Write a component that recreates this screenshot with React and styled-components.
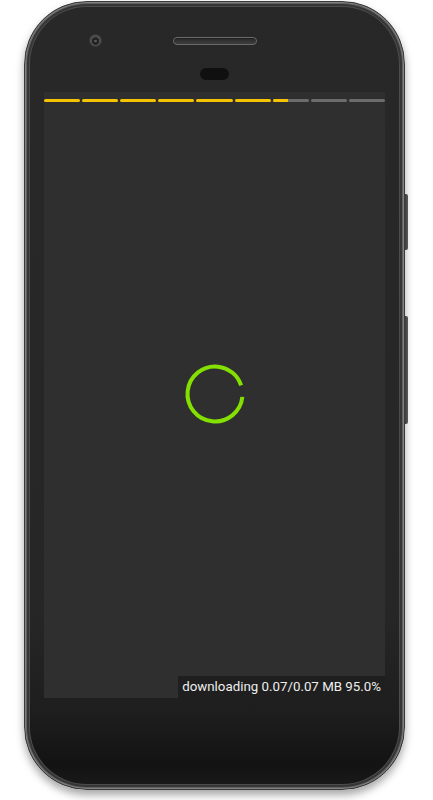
import React from "react";
import styled, { createGlobalStyle } from "styled-components";

const Global = createGlobalStyle`
  html, body { margin: 0; padding: 0; background: #ffffff; overflow: hidden; }
  body { font-family: Roboto, "Liberation Sans", sans-serif; }
  #root { width: 433px; height: 800px; }
`;

const Stage = styled.div`
  width: 433px;
  height: 800px;
  box-sizing: border-box;
  padding: 1px 0 0 24px;
`;

const Phone = styled.div`
  position: relative;
  width: 381px;
  height: 789px;
  box-sizing: border-box;
  border-radius: 63px;
  border: 1px solid #3a3a3a;
  background: linear-gradient(
    to bottom,
    #282828 0%,
    #262626 78%,
    #1e1e1e 90%,
    #131313 97%,
    #1a1a1a 100%
  );
  box-shadow:
    inset 0 0 0 1px #808080,
    inset 0 0 0 2px #626260,
    inset 0 0 0 4px #363636,
    inset 0 0 0 5px #4c4c4a,
    0 5px 9px rgba(0, 0, 0, 0.35);
  padding: 0 19px;
  display: flex;
  flex-direction: column;
`;

const SideButton = styled.div`
  position: absolute;
  right: -4px;
  top: ${(p) => p.$top}px;
  width: 3px;
  height: ${(p) => p.$h}px;
  border-radius: 0 2px 2px 0;
  background: linear-gradient(to right, #3c3c3c, #5a5a58);
`;

const TopRow = styled.div`
  display: grid;
  grid-template-columns: 1fr 84px 1fr;
  align-items: center;
  padding-top: 32px;
  height: 12px;
`;

const Camera = styled.div`
  justify-self: start;
  margin-left: 45px;
  width: 13px;
  height: 13px;
  box-sizing: border-box;
  border-radius: 50%;
  background: radial-gradient(circle at 50% 55%, #5a5a5a 0 1px, #232323 1.5px 3.5px, #4e4e4e 4px);
  border: 1px solid #3a3a3a;
`;

const Speaker = styled.div`
  height: 8px;
  box-sizing: border-box;
  border-radius: 4px;
  background: linear-gradient(to bottom, #2a2a2a, #3d3d3d);
  border: 1px solid #6a6a6a;
  box-shadow: inset 0 1px 1px #1e1e1e;
`;

const SensorRow = styled.div`
  display: flex;
  justify-content: center;
  margin-top: 22px;
`;

const Sensor = styled.div`
  width: 29px;
  height: 12px;
  border-radius: 6px;
  background: #101010;
`;

const Screen = styled.div`
  margin-top: 12px;
  height: 606px;
  background: #2f2f2f;
  display: flex;
  flex-direction: column;
`;

const Bar = styled.div`
  display: flex;
  gap: 2px;
  padding-top: 7px;
`;

const Segment = styled.div`
  flex: 1;
  height: 3px;
  border-radius: 1.5px;
  background: #6c6c6c;
  overflow: hidden;
`;

const Fill = styled.div`
  height: 100%;
  background: #f6c300;
`;

const Center = styled.div`
  flex: 1;
  display: flex;
  align-items: center;
  justify-content: center;
  padding-top: 10px;
`;

const Footer = styled.div`
  display: flex;
  justify-content: flex-end;
`;

const Status = styled.div`
  background: #1f1f1f;
  color: #eeeeee;
  font-family: Roboto, "Liberation Sans", sans-serif;
  font-size: 13.3px;
  line-height: 22px;
  padding: 0 4px 0 4px;
  white-space: nowrap;
`;

const fills = [1, 1, 1, 1, 1, 1, 0.43, 0, 0];

function Spinner() {
  const r = 27.5;
  const c = 2 * Math.PI * r;
  const arc = (335 / 360) * c;
  return (
    <svg width="62" height="62" viewBox="0 0 62 62">
      <circle
        cx="31"
        cy="31"
        r={r}
        fill="none"
        stroke="#84e000"
        strokeWidth="4"
        strokeDasharray={`${arc} ${c}`}
        transform="rotate(6 31 31)"
      />
    </svg>
  );
}

export default function App() {
  return (
    <>
      <Global />
      <Stage>
        <Phone>
          <SideButton $top={192} $h={56} />
          <SideButton $top={314} $h={108} />
          <TopRow>
            <Camera />
            <Speaker />
            <span />
          </TopRow>
          <SensorRow>
            <Sensor />
          </SensorRow>
          <Screen>
            <Bar>
              {fills.map((f, i) => (
                <Segment key={i}>
                  <Fill style={{ width: `${f * 100}%` }} />
                </Segment>
              ))}
            </Bar>
            <Center>
              <Spinner />
            </Center>
            <Footer>
              <Status>downloading 0.07/0.07 MB 95.0%</Status>
            </Footer>
          </Screen>
        </Phone>
      </Stage>
    </>
  );
}
